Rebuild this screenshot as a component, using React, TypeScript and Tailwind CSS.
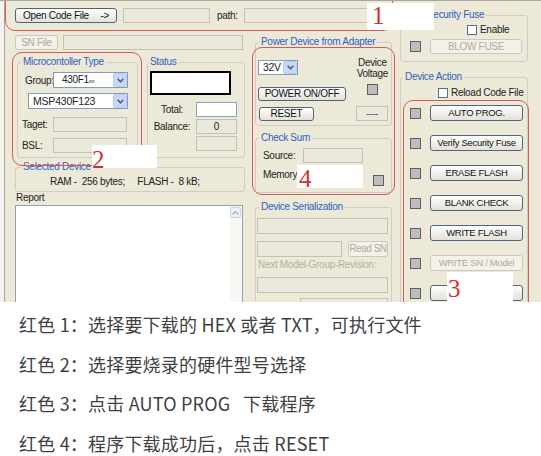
import React from "react";

type Kids = { className?: string; children?: React.ReactNode };

function Box({ className = "", white = false, children }: Kids & { white?: boolean }) {
  return (
    <div
      className={`flex items-center justify-center border ${
        white ? "border-[#8ea3b9] bg-white" : "border-[#c3c1b4] bg-[#ebe8dc]"
      } ${className}`}
    >
      {children}
    </div>
  );
}

function Btn({ className = "", disabled = false, children }: Kids & { disabled?: boolean }) {
  return (
    <button
      type="button"
      className={`flex items-center justify-center whitespace-nowrap rounded-[3px] border leading-none ${
        disabled
          ? "border-[#cbc9bc] bg-[#f3f2ea] text-[#aeab9c]"
          : "border-[#4f657b] bg-linear-to-b from-white to-[#e2e1da] text-[#111]"
      } ${className}`}
    >
      {children}
    </button>
  );
}

function Sel({ className = "", children }: Kids) {
  return (
    <div className={`flex items-center justify-between border border-[#7f9db9] bg-white ${className}`}>
      <span className="leading-none">{children}</span>
      <span className="flex h-full w-[14px] items-center justify-center rounded-[2px] border border-[#b9cbf1] bg-[#c8d7f7]">
        <svg width="7" height="5" viewBox="0 0 7 5">
          <path d="M0.6 0.8 L3.5 3.8 L6.4 0.8" stroke="#4d6185" strokeWidth="1.6" fill="none" />
        </svg>
      </span>
    </div>
  );
}

function Ind({ className = "" }: Kids) {
  return <div className={`h-[11px] w-[11px] shrink-0 border border-[#5e5e5e] bg-[#bdbdbd] ${className}`} />;
}

function Chk({ className = "" }: Kids) {
  return <div className={`h-[10px] w-[10px] shrink-0 border border-[#55708c] bg-white ${className}`} />;
}

function Group({ title, className = "", legend = "ml-[3px]", children }: Kids & { title: string; legend?: string }) {
  return (
    <fieldset className={`rounded-[3px] border border-[#d0cdbd] ${className}`}>
      <legend className={`px-[2px] leading-[12px] text-[#3060c2] ${legend}`}>{title}</legend>
      {children}
    </fieldset>
  );
}

function Tag({ n, className = "" }: { n: string; className?: string }) {
  return (
    <div className={`absolute bg-white ${className}`}>
      <span className="font-['Liberation_Serif',serif] text-[25px] leading-none text-[#cf2f35]">{n}</span>
    </div>
  );
}

const actions: [string, boolean][] = [
  ["AUTO PROG.", false],
  ["Verify Security Fuse", false],
  ["ERASE FLASH", false],
  ["BLANK CHECK", false],
  ["WRITE FLASH", false],
  ["WRITE SN / Model", true],
  ["", false],
];

const notes = [
  "红色 1：选择要下载的 HEX 或者 TXT，可执行文件",
  "红色 2：选择要烧录的硬件型号选择",
  "红色 3：点击 AUTO PROG\u00a0\u00a0 下载程序",
  "红色 4：程序下载成功后，点击 RESET",
];

export default function App() {
  return (
    <div className="h-[456px] w-[541px] overflow-hidden bg-white">
      {/* programmer window */}
      <div className="relative flex h-[302px] overflow-hidden border-t border-[#aaa89c] bg-[#ece9d8] font-['Liberation_Sans',Arial,sans-serif] text-[10px] tracking-[-0.3px] text-[#222]">
        <div className="w-[5px] shrink-0 border-r border-[#a9a79b] bg-[#f4f3ee]" />

        {/* left + middle */}
        <div className="w-[393px] shrink-0 pl-[10px]">
          <div className="mt-[7px] flex h-[15px] items-center">
            <Btn className="h-[15px] w-[102px] justify-between! px-[7px]">
              <span>Open Code File</span>
              <span>-&gt;</span>
            </Btn>
            <Box className="ml-[6px] h-[15px] w-[87px]" />
            <span className="ml-[7px]">path:</span>
            <Box className="ml-[6px] h-[15px] flex-1" />
          </div>

          <div className="flex">
            {/* left column */}
            <div className="w-[233px] shrink-0">
              <div className="mt-[12px] flex h-[15px]">
                <Btn disabled className="h-[15px] w-[43px]">SN File</Btn>
                <Box className="ml-[5px] h-[15px] w-[180px]" />
              </div>

              <div className="mt-[6px] flex">
                <Group title="Microcontoller Type" className="ml-[2px] h-[102px] w-[121px]" legend="ml-[3px]">
                  <div className="mt-[4px] flex items-center pl-[7px]">
                    <span className="w-[28px]">Group:</span>
                    <Sel className="h-[16px] w-[75px] pl-[8px]">
                      430F1<span className="text-[6px]">xx</span>
                    </Sel>
                  </div>
                  <Sel className="ml-[10px] mt-[5px] h-[16px] w-[100px] pl-[4px] text-[10.5px] tracking-[-0.2px]">
                    MSP430F123
                  </Sel>
                  <div className="mt-[8px] flex items-center pl-[4px]">
                    <span className="w-[31px]">Taget:</span>
                    <Box className="h-[15px] w-[74px]" />
                  </div>
                  <div className="mt-[6px] flex items-center pl-[4px]">
                    <span className="w-[31px]">BSL:</span>
                    <Box className="h-[15px] w-[74px]" />
                  </div>
                </Group>

                <Group title="Status" className="ml-[9px] h-[102px] w-[98px]" legend="ml-[0px]">
                  <div className="ml-[2px] mt-[3px] h-[24px] w-[81px] border-2 border-black bg-white" />
                  <div className="mt-[7px] flex flex-col gap-[2px]">
                    <div className="flex items-center">
                      <span className="w-[48px] text-center">Total:</span>
                      <Box white className="h-[15px] w-[41px]" />
                    </div>
                    <div className="flex items-center">
                      <span className="w-[48px] text-center">Balance:</span>
                      <Box className="h-[15px] w-[41px]">0</Box>
                    </div>
                    <div className="flex items-center">
                      <span className="w-[48px]" />
                      <Box className="h-[15px] w-[41px]" />
                    </div>
                  </div>
                </Group>
              </div>

              <Group title="Selected Device" className="mt-[3px] h-[31px] w-[230px]" legend="ml-[5px]">
                <div className="mt-[3px] whitespace-pre pl-[34px] leading-[12px]">
                  {"RAM -  256 bytes;     FLASH -  8 kB;"}
                </div>
              </Group>

              <div className="pl-[1px] leading-[12px]">Report</div>
              <div className="mt-[1px] flex h-[110px] w-[228px] justify-end border border-[#8ea3b9] bg-white">
                <div className="w-[12px] bg-[#f6f6f2] pt-[1px]">
                  <div className="flex h-[11px] w-[11px] items-center justify-center rounded-[2px] border border-[#c9d4e6] bg-[#eef1f7]">
                    <svg width="7" height="4" viewBox="0 0 7 4">
                      <path d="M0.6 3.4 L3.5 0.6 L6.4 3.4" stroke="#9aa8bf" strokeWidth="1.2" fill="none" />
                    </svg>
                  </div>
                </div>
              </div>
            </div>

            {/* middle column */}
            <div className="flex-1">
              <Group title="Power Device from Adapter" className="ml-[7px] mt-[13px] h-[90px] w-[137px]">
                <div className="mt-[9px] flex items-start">
                  <Sel className="ml-[2px] mt-[3px] h-[15px] w-[40px] pl-[4px] text-[10.5px]">32V</Sel>
                  <div className="ml-auto mr-[3px] text-center leading-[11px]">
                    Device
                    <br />
                    Voltage
                  </div>
                </div>
                <div className="mt-[5px] flex items-start">
                  <Btn className="ml-[2px] mt-[3px] h-[14px] w-[88px]">POWER ON/OFF</Btn>
                  <Ind className="ml-auto mr-[13px]" />
                </div>
                <div className="mt-[5px] flex items-center">
                  <Btn className="ml-[3px] h-[14px] w-[55px]">RESET</Btn>
                  <Box className="ml-auto mr-[3px] h-[15px] w-[32px] text-[#555]">----</Box>
                </div>
              </Group>

              <Group title="Check Sum" className="ml-[7px] mt-[6px] h-[61px] w-[137px]">
                <div className="mt-[4px] flex items-center pl-[7px]">
                  <span className="w-[40px]">Source:</span>
                  <Box className="h-[15px] w-[60px]" />
                </div>
                <div className="mt-[3px] flex items-start pl-[7px]">
                  <span className="mt-[1px] w-[40px]">Memory:</span>
                  <Box className="h-[15px] w-[60px]" />
                  <Ind className="ml-[10px] mt-[9px]" />
                </div>
              </Group>

              <Group title="Device Serialization" className="ml-[7px] mt-[8px] h-[120px] w-[137px]">
                <Box className="ml-[1px] mt-[5px] h-[16px] w-[131px]" />
                <div className="mt-[7px] flex">
                  <Box className="ml-[1px] h-[16px] w-[85px]" />
                  <Btn disabled className="ml-[6px] h-[16px] w-[40px] tracking-[-0.5px]">Read SN</Btn>
                </div>
                <div className="mt-[2px] pl-[2px] leading-[12px] text-[#b3b0a2]">Next Model-Group-Revision:</div>
                <Box className="ml-[1px] mt-[6px] h-[16px] w-[131px]" />
                <Box className="ml-[44px] mt-[5px] h-[16px] w-[88px]" />
              </Group>
            </div>
          </div>
        </div>

        {/* right column */}
        <div className="flex-1">
          <Group title="Security Fuse" className="ml-[2px] mt-[8px] h-[53px] w-[128px]" legend="ml-[24px]">
            <div className="ml-[66px] mt-[4px] flex items-center">
              <Chk />
              <span className="ml-[3px] leading-[10px]">Enable</span>
            </div>
            <div className="mt-[4px] flex items-center">
              <Ind className="ml-[9px]" />
              <Btn disabled className="ml-[9px] h-[15px] w-[92px]">BLOW FUSE</Btn>
            </div>
          </Group>

          <Group title="Device Action" className="ml-[2px] mt-[9px] h-[240px] w-[128px]" legend="ml-[2px]">
            <div className="ml-[37px] mt-[5px] flex items-center">
              <Chk />
              <span className="ml-[3px] leading-[10px]">Reload Code File</span>
            </div>
            <div className="mt-[7px] flex flex-col gap-[14px]">
              {actions.map(([label, dis], i) => (
                <div key={i} className="flex h-[16px] items-center">
                  <Ind className="ml-[9px]" />
                  <Btn disabled={dis} className="ml-[9px] h-[16px] w-[93px] text-[9.5px]">
                    {label}
                  </Btn>
                </div>
              ))}
            </div>
          </Group>
        </div>

        {/* red annotations */}
        <div className="absolute left-[5px] top-[-10px] h-[40px] w-[388px] rounded-[10px] border-[1.5px] border-[#d85a52]" />
        <Tag n="1" className="left-[367px] top-[2px] h-[27px] w-[67px] pl-[5px]" />
        <div className="absolute left-[12px] top-[51px] h-[114px] w-[130px] rounded-[10px] border-[1.5px] border-[#d85a52]" />
        <Tag n="2" className="left-[92px] top-[144px] h-[23px] w-[65px] pt-[2px]" />
        <div className="absolute left-[252px] top-[46px] h-[148px] w-[143px] rounded-[10px] border-[1.5px] border-[#d85a52]" />
        <Tag n="4" className="left-[297px] top-[164px] h-[23px] w-[66px] pl-[2px] pt-[1px]" />
        <div className="absolute left-[403px] top-[99px] h-[220px] w-[126px] rounded-[10px] border-[1.5px] border-[#d85a52]" />
        <Tag n="3" className="left-[447px] top-[271px] h-[30px] w-[66px] pl-[1px] pt-[4px]" />
      </div>

      {/* notes */}
      <div className="pl-[19px] pt-[3px] font-['Noto_Sans_CJK_SC',sans-serif] text-[18px] leading-[39.5px] tracking-[0.2px] text-[#3f3f3f]">
        {notes.map((t) => (
          <div key={t} className="whitespace-pre">
            {t}
          </div>
        ))}
      </div>
    </div>
  );
}
